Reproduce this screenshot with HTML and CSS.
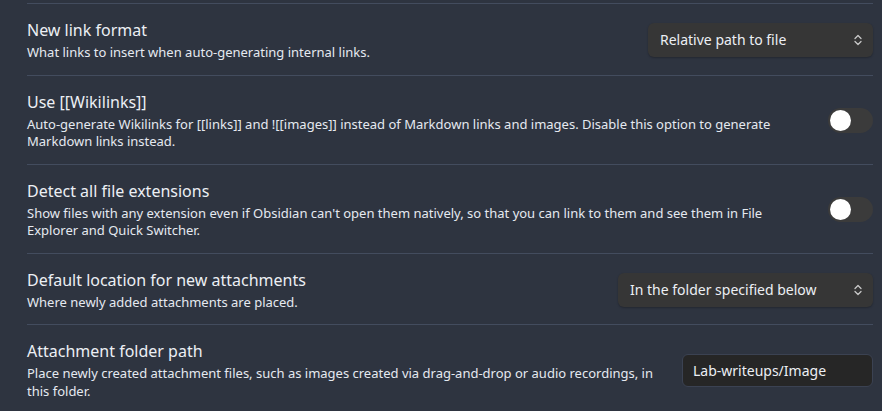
FILE: index.html
```html
<!DOCTYPE html>
<html>
<head>
<meta charset="utf-8">
<link rel="stylesheet" href="styles.css">
</head>
<body>
<div class="settings">
  <div class="item">
    <div class="info">
      <div class="name">New link format</div>
      <div class="desc">What links to insert when auto-generating internal links.</div>
    </div>
    <div class="control">
      <div class="dropdown dd1">Relative path to file<svg class="chev" width="10" height="14" viewBox="0 0 10 14"><path d="M2 5.5 L5 2.5 L8 5.5 M2 8.5 L5 11.5 L8 8.5" fill="none" stroke="#c8c8c8" stroke-width="1.3" stroke-linecap="round" stroke-linejoin="round"/></svg></div>
    </div>
  </div>
  <div class="item">
    <div class="info">
      <div class="name">Use [[Wikilinks]]</div>
      <div class="desc">Auto-generate Wikilinks for [[links]] and ![[images]] instead of Markdown links and images. Disable this option to generate Markdown links instead.</div>
    </div>
    <div class="control">
      <div class="toggle"><div class="knob"></div></div>
    </div>
  </div>
  <div class="item">
    <div class="info">
      <div class="name">Detect all file extensions</div>
      <div class="desc">Show files with any extension even if Obsidian can't open them natively, so that you can link to them and see them in File Explorer and Quick Switcher.</div>
    </div>
    <div class="control">
      <div class="toggle"><div class="knob"></div></div>
    </div>
  </div>
  <div class="item">
    <div class="info">
      <div class="name">Default location for new attachments</div>
      <div class="desc">Where newly added attachments are placed.</div>
    </div>
    <div class="control">
      <div class="dropdown dd2">In the folder specified below<svg class="chev" width="10" height="14" viewBox="0 0 10 14"><path d="M2 5.5 L5 2.5 L8 5.5 M2 8.5 L5 11.5 L8 8.5" fill="none" stroke="#c8c8c8" stroke-width="1.3" stroke-linecap="round" stroke-linejoin="round"/></svg></div>
    </div>
  </div>
  <div class="item">
    <div class="info">
      <div class="name">Attachment folder path</div>
      <div class="desc">Place newly created attachment files, such as images created via drag-and-drop or audio recordings, in this folder.</div>
    </div>
    <div class="control">
      <div class="textinput">Lab-writeups/Image</div>
    </div>
  </div>
</div>
</body>
</html>
```
FILE: styles.css
```css
html, body {
  margin: 0;
  padding: 0;
  background: #2e3440;
  height: 100%;
  overflow: hidden;
}
body {
  font-family: "Noto Sans", "Open Sans", sans-serif;
  color: #e5e9f0;
}
.settings {
  padding: 3px 9px 0 27px;
}
.item {
  display: flex;
  align-items: center;
  border-top: 1px solid #434c5e;
  padding: 15px 0 13px;
}
.info {
  flex: 1 1 auto;
  margin-right: 16px;
}
.name {
  font-size: 16px;
  line-height: 22px;
  color: #eceff4;
}
.desc {
  font-size: 13px;
  line-height: 17.5px;
  color: #e5e9f0;
  margin-top: 3px;
}
.control {
  flex: 0 0 auto;
  display: flex;
  justify-content: flex-end;
}
.dropdown {
  position: relative;
  height: 34px;
  box-sizing: border-box;
  background: #363636;
  border-radius: 6px;
  box-shadow: 0 1px 2px rgba(0,0,0,0.25);
  font-size: 14px;
  line-height: 34px;
  color: #eceff4;
  padding: 0 12px;
  white-space: nowrap;
}
.dd1 { width: 225px; }
.dd2 { width: 255px; }
.chev {
  position: absolute;
  right: 10px;
  top: 10px;
}
.toggle {
  width: 45px;
  height: 25px;
  border-radius: 13px;
  background: #3b3b3b;
  display: flex;
  align-items: center;
  padding-left: 2px;
  box-sizing: border-box;
}
.knob {
  width: 21px;
  height: 21px;
  border-radius: 50%;
  background: #ffffff;
}
.textinput {
  width: 191px;
  height: 33px;
  box-sizing: border-box;
  background: #262626;
  border: 1px solid #3b4252;
  border-radius: 6px;
  font-size: 14px;
  line-height: 31px;
  padding: 0 10px;
  color: #eceff4;
}
```
